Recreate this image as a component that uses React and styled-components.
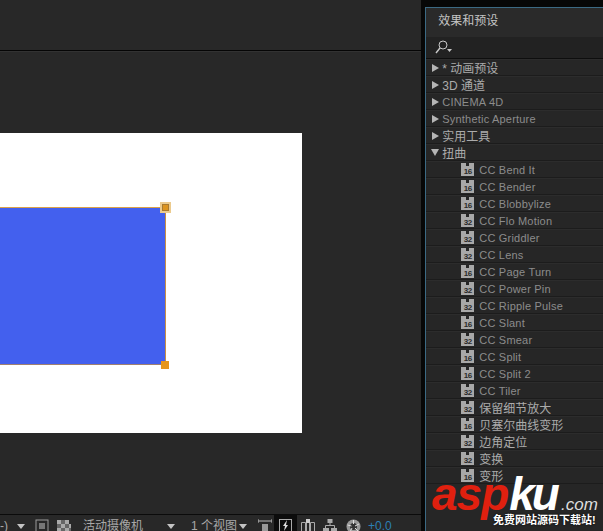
import React from "react";
import styled, { createGlobalStyle } from "styled-components";

const CJK = `"Liberation Sans", "Noto Sans CJK SC", sans-serif`;

const effects = [
  { bits: 16, name: "CC Bend It" },
  { bits: 16, name: "CC Bender" },
  { bits: 16, name: "CC Blobbylize" },
  { bits: 32, name: "CC Flo Motion" },
  { bits: 32, name: "CC Griddler" },
  { bits: 32, name: "CC Lens" },
  { bits: 16, name: "CC Page Turn" },
  { bits: 32, name: "CC Power Pin" },
  { bits: 32, name: "CC Ripple Pulse" },
  { bits: 16, name: "CC Slant" },
  { bits: 32, name: "CC Smear" },
  { bits: 16, name: "CC Split" },
  { bits: 16, name: "CC Split 2" },
  { bits: 32, name: "CC Tiler" },
  { bits: 32, name: "保留细节放大", cjk: true },
  { bits: 16, name: "贝塞尔曲线变形", cjk: true },
  { bits: 32, name: "边角定位", cjk: true },
  { bits: 32, name: "变换", cjk: true },
  { bits: 16, name: "变形", cjk: true },
];

const folders = [
  { name: "* 动画预设", cjk: true },
  { name: "3D 通道", cjk: true },
  { name: "CINEMA 4D" },
  { name: "Synthetic Aperture" },
  { name: "实用工具", cjk: true },
  { name: "扭曲", cjk: true, open: true },
];

const GlobalStyle = createGlobalStyle`
  html, body { margin: 0; padding: 0; background: #070707; }
  body { font-family: ${CJK}; }
`;

const Page = styled.div`
  position: relative;
  width: 603px;
  height: 531px;
  overflow: hidden;
  display: flex;
  background: #070707;
`;

const LeftPane = styled.div`
  width: 422px;
  display: flex;
  flex-direction: column;
  background: #282828;
`;

const TopStrip = styled.div`
  height: 50px;
  flex: none;
  border-bottom: 1px solid #050505;
  box-shadow: 0 1px 0 #323232;
`;

const Viewer = styled.div`
  flex: 1;
  min-height: 0;
  padding-top: 82px;
  box-sizing: border-box;
  border-bottom: 1px solid #0b0b0b;
`;

const Comp = styled.div`
  width: 302px;
  height: 300px;
  background: #fff;
  padding-top: 74px;
  box-sizing: border-box;
`;

const Layer = styled.div`
  position: relative;
  width: 166px;
  height: 158px;
  box-sizing: border-box;
  background: #4360ee;
  border-top: 1px solid #d9a04a;
  border-right: 1px solid #c98f45;
  border-bottom: 1px solid #a08070;
`;

const HandleTop = styled.div`
  position: absolute;
  right: -6px;
  top: -6px;
  width: 11px;
  height: 11px;
  box-sizing: border-box;
  background: #dc9420;
  border: 2px solid #eccb8e;
  outline: 1px solid #a97a30;
  outline-offset: -3px;
`;

const HandleBottom = styled.div`
  position: absolute;
  right: -4px;
  bottom: -5px;
  width: 8px;
  height: 8px;
  background: #e6951c;
`;

const Toolbar = styled.div`
  height: 16px;
  flex: none;
  display: flex;
  align-items: flex-start;
  color: #a8a8a8;
  font-size: 12px;
  line-height: 15px;
  overflow: hidden;
  white-space: nowrap;
`;

const ToolText = styled.span`
  flex: none;
  width: ${(p) => p.$w}px;
  margin-left: ${(p) => p.$ml || 0}px;
  padding-top: 4px;
  color: ${(p) => p.$color || "#a8a8a8"};
`;

const ToolIcon = styled.svg`
  flex: none;
  width: ${(p) => p.$w || 14}px;
  height: 15px;
  margin-left: ${(p) => p.$ml || 0}px;
  margin-top: 4px;
`;

const ActiveTool = styled.div`
  flex: none;
  width: 23px;
  height: 16px;
  margin-left: ${(p) => p.$ml || 0}px;
  padding: 4px 0 0 5px;
  box-sizing: border-box;
  background: #0c0c0c;
`;

const Caret = styled.span`
  flex: none;
  width: 0;
  height: 0;
  margin-left: ${(p) => p.$ml || 0}px;
  margin-top: 9px;
  border-left: 4px solid transparent;
  border-right: 4px solid transparent;
  border-top: 5px solid #c4c4c4;
`;

const RightPane = styled.div`
  width: 177px;
  margin: 7px 0 0 4px;
  border-left: 1px solid #3c6a84;
  border-top: 1px solid #3c6a84;
  background: #262626;
  display: flex;
  flex-direction: column;
  overflow: hidden;
`;

const PanelTitle = styled.div`
  height: 29px;
  flex: none;
  padding: 5px 0 0 12px;
  box-sizing: border-box;
  font-size: 12px;
  line-height: 16px;
  color: #c4c4c4;
  background: #2a2a2a;
`;

const SearchRow = styled.div`
  height: 22px;
  flex: none;
  box-sizing: border-box;
  padding: 2px 0 0 8px;
  background: #222;
  border-bottom: 1px solid #0e0e0e;
`;

const List = styled.div`
  flex: 1;
`;

const Row = styled.div`
  height: 17px;
  box-sizing: border-box;
  padding-left: ${(p) => p.$indent}px;
  display: flex;
  align-items: center;
  border-bottom: 1px solid #1c1c1c;
  border-top: 1px solid #2c2c2c;
  font-size: ${(p) => (p.$cjk ? 12 : 11)}px;
  letter-spacing: ${(p) => (p.$cjk ? 0 : 0.2)}px;
  color: ${(p) => (p.$cjk ? "#ababab" : "#8c8c8c")};
  white-space: nowrap;
`;

const Arrow = styled.span`
  flex: none;
  width: 0;
  height: 0;
  margin-right: 3px;
  ${(p) =>
    p.$open
      ? `border-left: 4px solid transparent; border-right: 4px solid transparent; border-top: 7px solid #b5b5b5;`
      : `border-top: 4px solid transparent; border-bottom: 4px solid transparent; border-left: 7px solid #b5b5b5; margin-left: 1px;`}
`;

const Badge = styled.span`
  position: relative;
  flex: none;
  width: 13px;
  height: 10px;
  margin: 3px 5px 0 0;
  background: #a8a8a8;
  color: #2b2b2b;
  font-size: 8px;
  font-weight: bold;
  line-height: 11px;
  text-align: center;
  letter-spacing: -0.3px;

  &::after {
    content: "";
    position: absolute;
    left: 0;
    right: 0;
    top: -3px;
    height: 3px;
    background: linear-gradient(90deg, #a8a8a8 5px, transparent 5px, transparent 8px, #a8a8a8 8px);
  }
`;

const Watermark = styled.div`
  position: absolute;
  left: 432px;
  top: 484px;
  width: 171px;
`;

const Brand = styled.div`
  height: 20px;
  display: flex;
  align-items: baseline;
  font-family: "Liberation Sans", sans-serif;
  font-style: italic;
  font-weight: bold;
  font-size: 46px;
  line-height: 20px;
  letter-spacing: -1px;
  color: #e0200f;
`;

const BrandWhite = styled.span`
  color: #fff;
  letter-spacing: -3px;
  margin-left: 1px;
`;

const BrandDomain = styled.span`
  font-size: 17px;
  font-weight: normal;
  color: #ddd;
  letter-spacing: 0;
  margin-left: 4px;
`;

const Slogan = styled.div`
  margin: 9px 0 0 61px;
  font-size: 11px;
  font-weight: bold;
  line-height: 14px;
  color: #fff;
  white-space: nowrap;
  text-shadow: 0 0 2px #000;
`;

function App() {
  return (
    <Page>
      <GlobalStyle />
      <LeftPane>
        <TopStrip />
        <Viewer>
          <Comp>
            <Layer>
              <HandleTop />
              <HandleBottom />
            </Layer>
          </Comp>
        </Viewer>
        <Toolbar>
          <ToolText $w={9}>-)</ToolText>
          <Caret $ml={8} />
          <ToolIcon $ml={10} viewBox="0 0 14 15">
            <rect x="1" y="1" width="12" height="12" fill="none" stroke="#999" />
            <rect x="4" y="4" width="6" height="6" fill="#777" />
          </ToolIcon>
          <ToolIcon $ml={8} viewBox="0 0 14 15">
            <path d="M0 1h4v4H0zM8 1h4v4H8zM4 5h4v4H4zM12 5h2v4h-2zM0 9h4v4H0zM8 9h4v4H8z" fill="#aaa" />
            <path d="M4 1h4v4H4zM0 5h4v4H0zM8 5h4v4H8zM4 9h4v4H4zM12 9h2v4h-2z" fill="#666" />
          </ToolIcon>
          <ToolText $w={84} $ml={12}>活动摄像机</ToolText>
          <Caret />
          <ToolText $w={48} $ml={16}>1 个视图</ToolText>
          <Caret />
          <ToolIcon $ml={11} viewBox="0 0 14 15">
            <path d="M0 2h14M0 0v4M14 0v4" stroke="#bbb" fill="none" />
            <rect x="4" y="5" width="6" height="8" fill="#999" />
          </ToolIcon>
          <ActiveTool $ml={2}>
            <svg width="13" height="13" viewBox="0 0 13 13">
              <rect x="0.5" y="0.5" width="12" height="12" fill="none" stroke="#aaa" />
              <path d="M8 1L4 7h2l-1 5 4-6H7z" fill="#ddd" />
            </svg>
          </ActiveTool>
          <ToolIcon $ml={4} viewBox="0 0 14 15">
            <path d="M0.5 3.5h4v10h-4zM9.5 3.5h4v10h-4zM5.5 3h3v10h-3z" fill="none" stroke="#aaa" />
            <rect x="5" y="0" width="4" height="4" fill="#ccc" />
          </ToolIcon>
          <ToolIcon $ml={8} viewBox="0 0 14 15">
            <rect x="4.5" y="0" width="5" height="4" fill="#aaa" />
            <path d="M7 4v3M2.5 9V6.5h9V9" stroke="#aaa" fill="none" />
            <rect x="0" y="9" width="6" height="5" fill="#aaa" />
            <rect x="8" y="9" width="6" height="5" fill="#aaa" />
          </ToolIcon>
          <ToolIcon $ml={9} $w={15} viewBox="0 0 15 15">
            <circle cx="7.5" cy="7.5" r="7" fill="#9a9a9a" />
            <circle cx="7.5" cy="7.5" r="3.5" fill="#333" />
            <path d="M7.5 1v4M13 5l-4 2M12 12L9 9M4 13l2-4M1.5 6l4 1" stroke="#ddd" />
          </ToolIcon>
          <ToolText $w={30} $ml={7} $color="#2c7fb5">+0.0</ToolText>
        </Toolbar>
      </LeftPane>
      <RightPane>
        <PanelTitle>效果和预设</PanelTitle>
        <SearchRow>
          <svg width="22" height="16" viewBox="0 0 22 16">
            <circle cx="9" cy="6" r="4" fill="none" stroke="#c8c8c8" />
            <path d="M6 9l-4 5" stroke="#c8c8c8" strokeWidth="1.4" />
            <path d="M13 10h5l-2.5 3z" fill="#c8c8c8" />
          </svg>
        </SearchRow>
        <List>
          {folders.map((f) => (
            <Row key={f.name} $indent={5} $cjk={f.cjk}>
              <Arrow $open={f.open} />
              {f.name}
            </Row>
          ))}
          {effects.map((e) => (
            <Row key={e.name} $indent={35} $cjk={e.cjk}>
              <Badge>{e.bits}</Badge>
              {e.name}
            </Row>
          ))}
        </List>
      </RightPane>
      <Watermark>
        <Brand>
          asp
          <BrandWhite>ku</BrandWhite>
          <BrandDomain>.com</BrandDomain>
        </Brand>
        <Slogan>免费网站源码下载站!</Slogan>
      </Watermark>
    </Page>
  );
}

export default App;
